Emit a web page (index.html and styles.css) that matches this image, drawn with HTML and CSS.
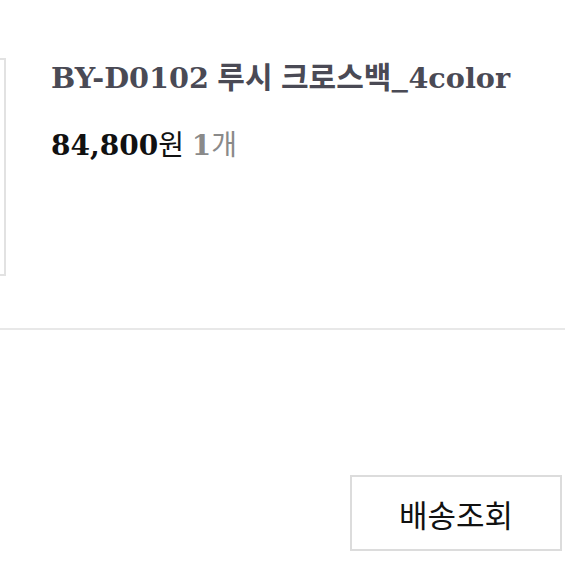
FILE: index.html
```html
<!DOCTYPE html>
<html lang="ko">
<head>
    <meta charset="UTF-8">
    <title>주문 상품</title>
    <link rel="stylesheet" href="styles.css">
</head>
<body>
    <div class="order">
        <div class="order-item">
            <div class="thumb"></div>
            <div class="info">
                <h2 class="name"><span class="latin">BY-D0102</span> 루시 크로스백_<span class="latin">4color</span></h2>
                <p class="price">
                    <span class="latin strong">84,800</span><span class="unit">원</span>
                    <span class="latin qty">1</span><span class="unit qty">개</span>
                </p>
            </div>
        </div>
        <div class="actions">
            <button type="button" class="track-btn">배송조회</button>
        </div>
    </div>
</body>
</html>
```

FILE: styles.css
```css
body {
    margin: 0;
    padding: 0;
    background-color: #fff;
    font-family: "Noto Sans CJK KR", "Noto Sans", sans-serif;
}

.order {
    width: 565px;
}

.order-item {
    display: flex;
    align-items: flex-start;
    padding-top: 58px;
    height: 270px;
    border-bottom: 2px solid #e8e8e8;
}

.thumb {
    width: 200px;
    height: 214px;
    margin-left: -198px;
    border: 2px solid #e2e2e2;
    background-color: #fff;
}

.info {
    padding-left: 45px;
}

.name {
    margin: 0;
    font-size: 30px;
    font-weight: 700;
    line-height: 34px;
    color: #4a4a55;
    white-space: nowrap;
}

.latin {
    font-family: "DejaVu Serif", "Liberation Serif", serif;
}

.name .latin {
    font-size: 28.7px;
}

.price {
    margin: 29px 0 0;
    font-size: 28px;
    line-height: 38px;
    color: #111;
}

.strong {
    font-weight: 700;
}

.unit {
    font-weight: 400;
}

.qty {
    color: #8a8a8a;
}

.price .latin.qty {
    font-weight: 700;
}

.actions {
    display: flex;
    justify-content: flex-end;
    padding: 145px 3px 0 0;
}

.track-btn {
    width: 212px;
    height: 76px;
    border: 2px solid #dcdcdc;
    background-color: #fff;
    font-family: "Noto Sans CJK KR", "Noto Sans", sans-serif;
    font-size: 31px;
    color: #111;
    cursor: pointer;
}
```
